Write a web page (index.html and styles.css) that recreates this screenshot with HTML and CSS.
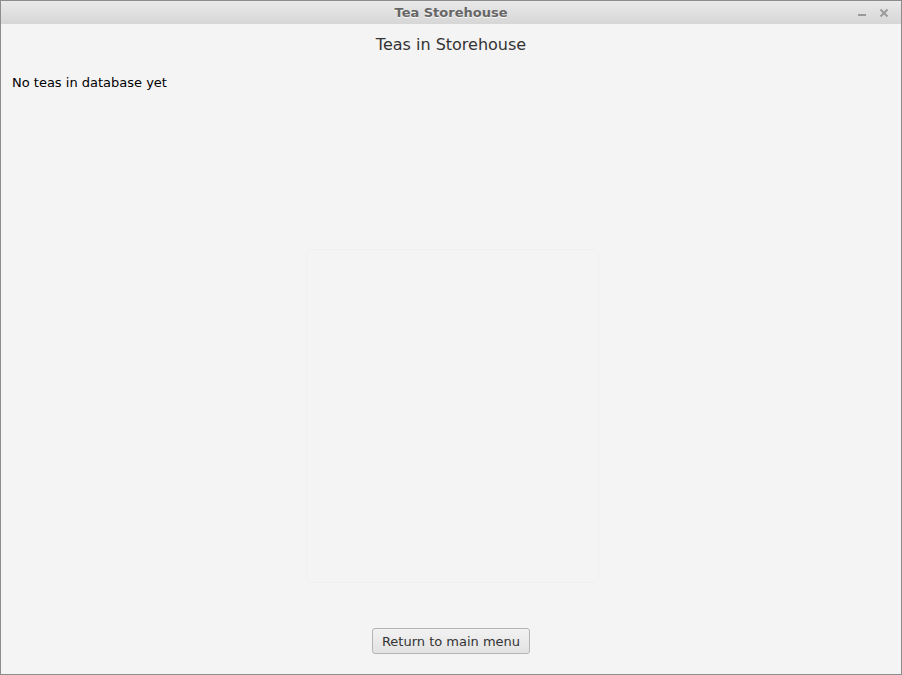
FILE: index.html
```html
<!DOCTYPE html>
<html>
<head>
<meta charset="utf-8">
<link rel="stylesheet" href="styles.css">
</head>
<body>
<div class="window">
  <div class="titlebar">
    <span class="title">Tea Storehouse</span>
    <div class="controls">
      <svg class="ctl" width="10" height="10" viewBox="0 0 10 10"><rect x="1" y="6" width="8" height="2" fill="#9a9a9a"/></svg>
      <svg class="ctl" width="10" height="10" viewBox="0 0 10 10"><path d="M1.5 1.5 L8.5 8.5 M8.5 1.5 L1.5 8.5" stroke="#9a9a9a" stroke-width="2"/></svg>
    </div>
  </div>
  <div class="content">
    <h1 class="heading">Teas in Storehouse</h1>
    <p class="empty">No teas in database yet</p>
    <div class="spacer"></div>
    <div class="footer">
      <button class="btn">Return to main menu</button>
    </div>
    <div class="ghost"></div>
  </div>
</div>
</body>
</html>
```

FILE: styles.css
```css
html, body {
  margin: 0;
  padding: 0;
  background: #f4f4f4;
}
body {
  font-family: "DejaVu Sans", sans-serif;
}
.window {
  width: 902px;
  height: 675px;
  box-sizing: border-box;
  border: 1px solid #8c8c8c;
  display: flex;
  flex-direction: column;
  background: #f4f4f4;
}
.titlebar {
  height: 23px;
  flex: none;
  background: linear-gradient(#e9e9e9, #d6d6d6);
  display: flex;
  align-items: center;
  justify-content: center;
  position: relative;
  border-radius: 3px 3px 0 0;
}
.title {
  font-weight: bold;
  font-size: 13px;
  color: #666;
  text-shadow: 0 1px 0 #f8f8f8;
}
.controls {
  position: absolute;
  right: 12px;
  top: 7px;
  display: flex;
  gap: 12px;
}
.ctl {
  display: block;
}
.content {
  flex: 1;
  display: flex;
  flex-direction: column;
  position: relative;
}
.heading {
  margin: 11px 0 0;
  font-weight: normal;
  font-size: 16px;
  line-height: 19px;
  color: #333;
  text-align: center;
}
.empty {
  margin: 21px 0 0 11px;
  font-size: 13px;
  line-height: 16px;
  color: #000;
}
.spacer {
  flex: 1;
}
.footer {
  display: flex;
  justify-content: center;
  padding-bottom: 20px;
}
.btn {
  font-family: "DejaVu Sans", sans-serif;
  font-size: 13px;
  color: #333;
  height: 26px;
  padding: 0 8px;
  width: 158px;
  border: 1px solid #b4b4b4;
  border-radius: 3px;
  background: linear-gradient(#f2f2f2, #e2e2e2);
}
.ghost {
  position: absolute;
  left: 305px;
  top: 225px;
  width: 291px;
  height: 332px;
  border: 1px solid #f0f0f0;
  border-radius: 4px;
  pointer-events: none;
}
```
